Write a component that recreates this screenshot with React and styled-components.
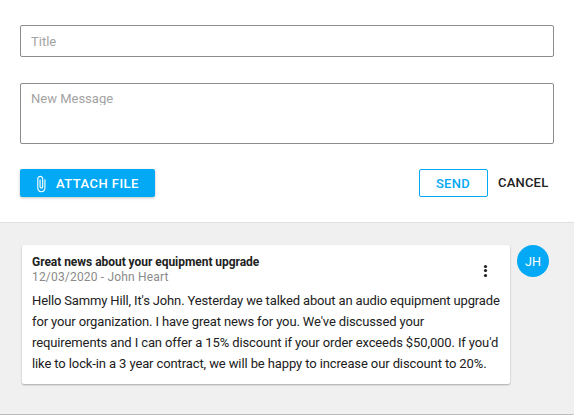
import React from "react";
import styled, { createGlobalStyle } from "styled-components";

const Global = createGlobalStyle`
  * { box-sizing: border-box; }
  body { margin: 0; background: #fff; font-family: Roboto, sans-serif; font-size: 13px; color: #212121; overflow: hidden; }
`;
const Page = styled.div`
  display: flex;
  flex-direction: column;
  height: 415px;
`;
const Form = styled.form`
  display: flex;
  flex-direction: column;
  height: 222px;
  padding: 25px 20px 0;
`;
const Field = styled.div`
  height: ${(p) => p.$height}px;
  padding: ${(p) => p.$top}px 10px 0;
  margin-bottom: 26px;
  border: 1px solid #8c8c8c;
  border-radius: 2px;
`;
const Placeholder = styled.div`
  height: 14px;
  overflow: hidden;
  color: #a3a3a3;
  line-height: 15px;
`;
const Actions = styled.div`
  display: flex;
  align-items: center;
  height: 28px;
  margin-top: -1px;
`;
const Button = styled.button`
  display: flex;
  align-items: center;
  height: 28px;
  width: ${(p) => p.$width}px;
  padding: 0 0 0 10px;
  border: 0;
  border-radius: 2px;
  background: none;
  color: #212121;
  font: 500 13px/18px Roboto, sans-serif;
  letter-spacing: 0.2px;
  white-space: nowrap;
`;
const AttachButton = styled(Button)`
  margin-right: auto;
  padding: 1px 0 0 12px;
  gap: 6px;
  background: #03a9f4;
  color: #fff;
  letter-spacing: 0.45px;
  box-shadow: 0 1px 3px rgba(0, 0, 0, 0.24);
`;
const SendButton = styled(Button)`
  padding: 1px 0 0 16px;
  border: 1px solid #03a9f4;
  color: #03a9f4;
  letter-spacing: 0.25px;
`;
const Feed = styled.section`
  display: flex;
  gap: 7px;
  flex: 1;
  align-items: flex-start;
  padding: 22px 22px 0;
  background: #f0f0f0;
  border-top: 1px solid #e0e0e0;
  border-bottom: 1px solid #bbb;
  border-bottom-right-radius: 2px;
`;
const Card = styled.article`
  width: 488px;
  height: 139px;
  padding: 8px 10px 0;
  border-radius: 2px;
  background: #fff;
  box-shadow: 0 1px 2px rgba(0, 0, 0, 0.3);
`;
const CardHeader = styled.header`
  display: flex;
  justify-content: space-between;
`;
const Subject = styled.div`
  padding-top: 1px;
  font-size: 12px;
  font-weight: 700;
  letter-spacing: -0.04px;
  line-height: 16px;
`;
const Meta = styled.div`
  color: #8a8a8a;
  font-size: 12px;
  letter-spacing: 0.18px;
  line-height: 14px;
`;
const Menu = styled.svg`
  width: 18px;
  height: 18px;
  margin: 9px 6px 0 0;
`;
const Body = styled.div`
  margin-top: 6px;
  line-height: 21px;
  white-space: nowrap;
`;
const Line = styled.div`
  letter-spacing: ${(p) => p.$tracking}px;
`;
const Avatar = styled.div`
  display: grid;
  place-items: center;
  width: 32px;
  height: 32px;
  flex: none;
  border-radius: 50%;
  background: #03a9f4;
  color: #fff;
  font-size: 12.5px;
`;

const lines = [
  ["Hello Sammy Hill, It's John. Yesterday we talked about an audio equipment upgrade", -0.145],
  ["for your organization. I have great news for you. We've discussed your", -0.13],
  ["requirements and I can offer a 15% discount if your order exceeds $50,000. If you'd", -0.11],
  ["like to lock-in a 3 year contract, we will be happy to increase our discount to 20%.", -0.11],
];

export default function App() {
  return (
    <Page>
      <Global />
      <Form>
        <Field $height={32} $top={8}><Placeholder>Title</Placeholder></Field>
        <Field $height={61} $top={7}><Placeholder>New Message</Placeholder></Field>
        <Actions>
          <AttachButton type="button" $width={135}>
            <svg width="18" height="18" viewBox="0 0 24 24" fill="#fff">
              <path d="M16.5 6v11.5c0 2.21-1.79 4-4 4s-4-1.79-4-4V5a2.5 2.5 0 0 1 5 0v10.5c0 .55-.45 1-1 1s-1-.45-1-1V6H10v9.5a2.5 2.5 0 0 0 5 0V5c0-2.21-1.79-4-4-4S7 2.790 7 5v12.5c0 3.040 2.460 5.500 5.500 5.500s5.500-2.460 5.500-5.500V6h-1.500z" />
            </svg>
            ATTACH FILE
          </AttachButton>
          <SendButton type="button" $width={69}>SEND</SendButton>
          <Button type="button" $width={66}>CANCEL</Button>
        </Actions>
      </Form>
      <Feed>
        <Card>
          <CardHeader>
            <div>
              <Subject>Great news about your equipment upgrade</Subject>
              <Meta>12/03/2020 - John Heart</Meta>
            </div>
            <Menu viewBox="0 0 18 18" fill="#212121">
              <circle cx="9.5" cy="4.5" r="1.6" />
              <circle cx="9.5" cy="8.5" r="1.6" />
              <circle cx="9.5" cy="13.5" r="1.6" />
            </Menu>
          </CardHeader>
          <Body>{lines.map(([text, tracking]) => <Line key={text} $tracking={tracking}>{text}</Line>)}</Body>
        </Card>
        <Avatar>JH</Avatar>
      </Feed>
    </Page>
  );
}
